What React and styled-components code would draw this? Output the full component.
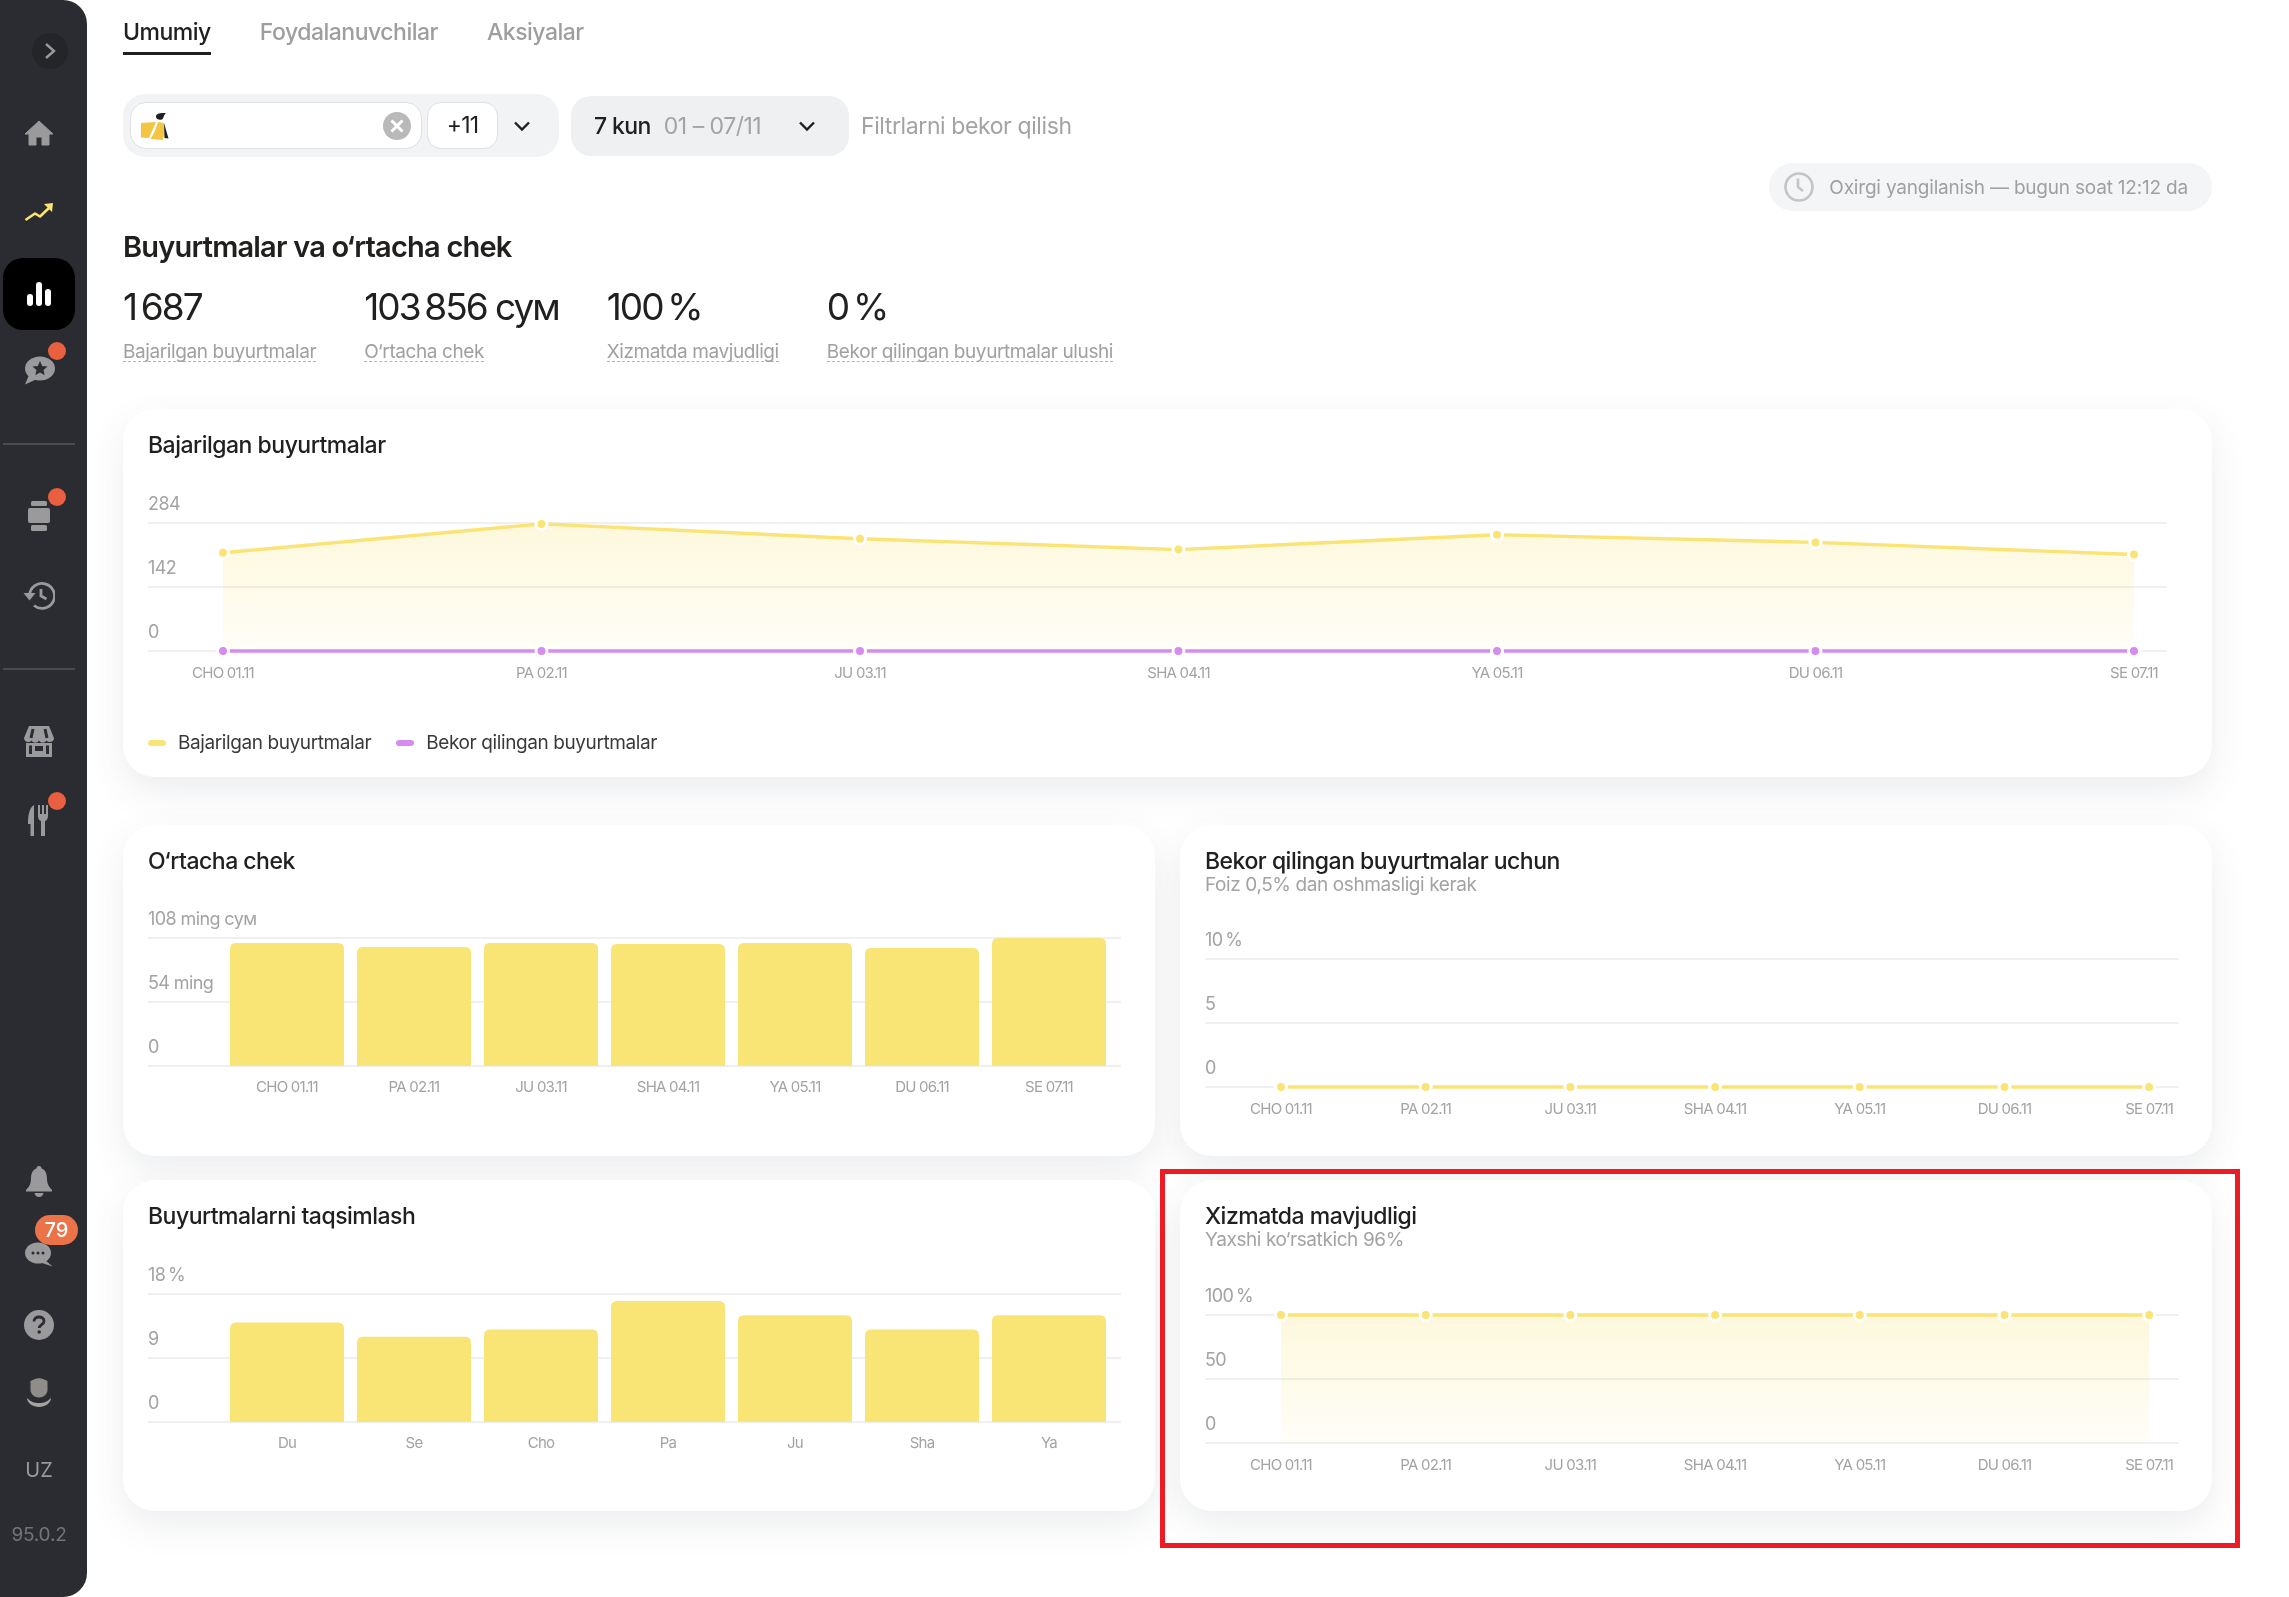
import * as React from "react";
import styled, { createGlobalStyle } from "styled-components";

const FONT = `Inter, "Noto Sans", sans-serif`;

const GlobalStyle = createGlobalStyle`
  html, body {
    margin: 0;
    background: #fff;
    font-family: ${FONT};
    color: #21201f;
  }
  * { box-sizing: border-box; }
`;

const HomeIcon = () => (
  <svg width="30" height="26" viewBox="0 0 30 26">
    <path d="M15 1 L29 14 H25 V25 H18 V17 H12 V25 H5 V14 H1 Z" fill="#9a9a9d" stroke="#9a9a9d" strokeWidth="1" strokeLinejoin="round" />
  </svg>
);

const TrendIcon = () => (
  <svg width="30" height="20" viewBox="0 0 30 20">
    <path d="M1.5 18 L11 11.5 L16 14.5 L25 6" fill="none" stroke="#fbe56f" strokeWidth="2.6" strokeLinejoin="round" />
    <path d="M20 2 L29 1 L28 10 Z" fill="#fbe56f" />
  </svg>
);

const BarsIcon = () => (
  <svg width="24" height="24" viewBox="0 0 24 24">
    <rect x="0" y="12" width="6" height="12" rx="3" fill="#fff" />
    <rect x="9" y="0" width="6" height="24" rx="3" fill="#fff" />
    <rect x="18" y="7" width="6" height="17" rx="3" fill="#fff" />
  </svg>
);

const ReviewIcon = () => (
  <svg width="31" height="29" viewBox="0 0 31 29">
    <ellipse cx="16" cy="12.5" rx="15" ry="12" fill="#9a9a9d" />
    <path d="M5 19 L1 28.5 L12 23.5 Z" fill="#9a9a9d" />
    <path d="M16 5 L18.2 10 L23.5 10.5 L19.5 14 L20.7 19.2 L16 16.5 L11.3 19.2 L12.5 14 L8.5 10.5 L13.8 10 Z" fill="#2b2c31" />
  </svg>
);

const OrderIcon = () => (
  <svg width="22" height="30" viewBox="0 0 22 30">
    <rect x="3" y="0" width="16" height="5" rx="1.5" fill="#9a9a9d" />
    <rect x="0" y="7" width="22" height="15" rx="2" fill="#9a9a9d" />
    <rect x="3" y="24" width="16" height="6" rx="1.5" fill="#9a9a9d" />
  </svg>
);

const HistoryIcon = () => (
  <svg width="32" height="29" viewBox="0 0 32 29">
    <path d="M6.5 14.5 A 12.5 12.5 0 1 1 11 24.5" fill="none" stroke="#9a9a9d" strokeWidth="2.8" />
    <path d="M0.5 12 H12.5 L6.5 19.5 Z" fill="#9a9a9d" />
    <path d="M18 8 V15 L23.5 18" fill="none" stroke="#9a9a9d" strokeWidth="2.8" />
  </svg>
);

const StoreIcon = () => (
  <svg width="30" height="31" viewBox="0 0 30 31">
    <path d="M5 0 H25 L30 12 C30 16 25 17.5 22.5 14.5 C20.5 17.5 17 17.5 15 14.5 C13 17.5 9.5 17.5 7.5 14.5 C5 17.5 0 16 0 12 Z" fill="#9a9a9d" />
    <path d="M9 3 L7 12 M21 3 L23 12" stroke="#2b2c31" strokeWidth="3" />
    <path fillRule="evenodd" d="M2 17 H28 V31 H2 Z M5 19.5 V28 H8 V19.5 Z M11 20 V25 H19 V20 Z M22 19.5 V28 H25 V19.5 Z" fill="#9a9a9d" />
  </svg>
);

const ForkIcon = () => (
  <svg width="22" height="31" viewBox="0 0 22 31">
    <path d="M6 0 V31 H2.5 V19 H0 C0 9 1.5 3 6 0 Z" fill="#9a9a9d" />
    <path d="M10 0 H12 V9 H14 V0 H16 V9 H18 V0 H20 V11 C20 14 18.5 15.5 17 16 V31 H13 V16 C11.5 15.5 10 14 10 11 Z" fill="#9a9a9d" />
  </svg>
);

const BellIcon = () => (
  <svg width="26" height="31" viewBox="0 0 26 31">
    <circle cx="13" cy="2.5" r="2.5" fill="#9a9a9d" />
    <path d="M13 2 C19 2 21 7 21 13 C21 18 23 21 26 24 V25.5 H0 V24 C3 21 5 18 5 13 C5 7 7 2 13 2 Z" fill="#9a9a9d" />
    <path d="M8.5 27 H17.5 C17 29.5 15.2 31 13 31 C10.8 31 9 29.5 8.5 27 Z" fill="#9a9a9d" />
  </svg>
);

const ChatIcon = () => (
  <svg width="28" height="25" viewBox="0 0 28 25">
    <ellipse cx="13" cy="11" rx="13" ry="10.5" fill="#9a9a9d" />
    <path d="M19 17 L27.5 24.5 L17 21 Z" fill="#9a9a9d" />
    <circle cx="8" cy="11" r="1.5" fill="#2b2c31" />
    <circle cx="13" cy="11" r="1.5" fill="#2b2c31" />
    <circle cx="18" cy="11" r="1.5" fill="#2b2c31" />
  </svg>
);

const HelpIcon = () => (
  <svg width="30" height="30" viewBox="0 0 30 30">
    <circle cx="15" cy="15" r="15" fill="#9a9a9d" />
    <path d="M10 11.5 C10 8.5 12.3 7 15 7 C18 7 20 8.7 20 11.2 C20 14.6 15.2 14.6 15.2 18" fill="none" stroke="#2b2c31" strokeWidth="2.8" />
    <circle cx="15.2" cy="22" r="1.8" fill="#2b2c31" />
  </svg>
);

const PersonIcon = () => (
  <svg width="26" height="29" viewBox="0 0 26 29">
    <path d="M4.5 3 L9 1 C11 0 15 0 17 1 L21.5 3 V12 C21.5 16 17.5 19.5 13 19.5 C8.5 19.5 4.5 16 4.5 12 Z" fill="#8f8d8a" />
    <path d="M1 20 C5 24 8 25 13 25 C18 25 21 24 25 20 C25 25 19 29 13 29 C7 29 1 25 1 20 Z" fill="#a5a39f" />
  </svg>
);

const ChevronRight = () => (
  <svg width="12" height="18" viewBox="0 0 12 18">
    <path d="M2 2 L10 9 L2 16" fill="none" stroke="#9a9a9d" strokeWidth="2.4" />
  </svg>
);

const ChevronDown = () => (
  <svg width="18" height="12" viewBox="0 0 18 12">
    <path d="M2 2.5 L9 9.5 L16 2.5" fill="none" stroke="#21201f" strokeWidth="2.4" />
  </svg>
);

const ClearIcon = () => (
  <svg width="28" height="28" viewBox="0 0 28 28">
    <circle cx="14" cy="14" r="14" fill="#b9b9b9" />
    <path d="M8.5 8.5 L19.5 19.5 M19.5 8.5 L8.5 19.5" stroke="#fff" strokeWidth="3" />
  </svg>
);

const ClockIcon = () => (
  <svg width="30" height="30" viewBox="0 0 30 30">
    <circle cx="15" cy="15" r="13.5" fill="none" stroke="#c3c4c6" strokeWidth="2.6" />
    <path d="M14 6.5 V15 L19 19" fill="none" stroke="#c3c4c6" strokeWidth="2.6" />
  </svg>
);

const RestaurantLogo = () => (
  <svg width="28" height="28" viewBox="0 0 28 28">
    <path d="M0 11 L15 10 L8 26 L0 25.5 Z" fill="#f4c542" />
    <path d="M17 10 L23 11 L23.5 19 L22 28 L9.5 27 L14 19 Z" fill="#f4c542" />
    <path d="M15 4.5 C15 2 18 0.5 25 1 C23 2.5 23 4 22 6.5 C21 8.5 15 8.5 15 4.5 Z" fill="#21201f" />
    <path d="M23 11 L27.5 26.5 L23.5 26 Z" fill="#21201f" />
  </svg>
);

const WEEK = ["CHO 01.11", "PA 02.11", "JU 03.11", "SHA 04.11", "YA 05.11", "DU 06.11", "SE 07.11"];
const WEEKDAYS = ["Du", "Se", "Cho", "Pa", "Ju", "Sha", "Ya"];
const ROWS = [30, 94, 158];
const BOTTOM = 158;
const RANGE = 128;
const YELLOW = "#fae476";
const PURPLE = "#d48cf0";

const ChartSvg = styled.svg`
  display: block;
  margin-top: ${(p) => p.$top}px;
  overflow: visible;
`;

const AxisValue = styled.text`
  font: 400 18px ${FONT};
  letter-spacing: -0.6px;
  fill: #a3a3a3;
  dominant-baseline: middle;
`;

const AxisDay = styled.text`
  font: 400 15px ${FONT};
  letter-spacing: -0.75px;
  fill: #a3a3a3;
  text-anchor: middle;
  dominant-baseline: middle;
`;

const Axes = ({ width, yLabels }) => (
  <>
    {ROWS.map((y, i) => (
      <g key={y}>
        <line x1="0" x2={width} y1={y} y2={y} stroke="#f0f0f1" strokeWidth="2" />
        <AxisValue x="0" y={y - 18}>{yLabels[i]}</AxisValue>
      </g>
    ))}
  </>
);

const LineSeries = ({ color, points }) => (
  <>
    <polyline points={points.map((p) => p.join(",")).join(" ")} fill="none" stroke={color} strokeWidth="3.4" />
    {points.map(([x, y]) => (
      <circle key={x} cx={x} cy={y} r="5.5" fill={color} stroke="#fff" strokeWidth="3" />
    ))}
  </>
);

const LineChart = ({ width, top, first, step, max, yLabels, labels = WEEK, series, areaId }) => {
  const xs = labels.map((_, i) => first + step * i);
  const toPoints = (values) => values.map((v, i) => [xs[i], BOTTOM - (v / max) * RANGE]);
  const main = toPoints(series[0].values);
  return (
    <ChartSvg $top={top} width={width} height="192">
      {areaId && (
        <defs>
          <linearGradient id={areaId} x1="0" y1="0" x2="0" y2="1">
            <stop offset="0" stopColor="#fdf8dc" />
            <stop offset="1" stopColor="#fffef8" />
          </linearGradient>
        </defs>
      )}
      <Axes width={width} yLabels={yLabels} />
      {areaId && (
        <polygon
          points={`${xs[0]},${BOTTOM} ${main.map((p) => p.join(",")).join(" ")} ${xs[xs.length - 1]},${BOTTOM}`}
          fill={`url(#${areaId})`}
          style={{ mixBlendMode: "multiply" }}
        />
      )}
      {series.map((s) => (
        <LineSeries key={s.color} color={s.color} points={toPoints(s.values)} />
      ))}
      {labels.map((l, i) => (
        <AxisDay key={l} x={xs[i]} y={BOTTOM + 23}>{l}</AxisDay>
      ))}
    </ChartSvg>
  );
};

const BarChart = ({ top, max, yLabels, labels, values }) => (
  <ChartSvg $top={top} width="973" height="192">
    <Axes width={973} yLabels={yLabels} />
    {values.map((v, i) => {
      const h = (v / max) * RANGE;
      const x = 82 + i * 127;
      return (
        <path
          key={labels[i]}
          d={`M${x} ${BOTTOM} V${BOTTOM - h + 6} q0 -6 6 -6 H${x + 108} q6 0 6 6 V${BOTTOM} Z`}
          fill="#f9e476"
        />
      );
    })}
    {labels.map((l, i) => (
      <AxisDay key={l} x={82 + 57 + i * 127} y={BOTTOM + 22}>{l}</AxisDay>
    ))}
  </ChartSvg>
);

const NAV_TOP = [
  { icon: <HomeIcon /> },
  { icon: <TrendIcon /> },
  { icon: <BarsIcon />, active: true },
  { icon: <ReviewIcon />, dot: true },
];

const App = () => (
  <>
    <GlobalStyle />
    <Page>
      <Sidebar>
        <Toggle><ChevronRight /></Toggle>
        <NavGroup>
          {NAV_TOP.map((item, i) => (
            <NavItem key={i} $active={item.active}>
              {item.icon}
              {item.dot && <Dot />}
            </NavItem>
          ))}
        </NavGroup>
        <Divider />
        <NavGroup>
          <NavItem><OrderIcon /><Dot /></NavItem>
          <NavItem><HistoryIcon /></NavItem>
        </NavGroup>
        <Divider />
        <NavGroup>
          <NavItem><StoreIcon /></NavItem>
          <NavItem><ForkIcon /><Dot /></NavItem>
        </NavGroup>
        <SidebarBottom>
          <BottomItem><BellIcon /></BottomItem>
          <BottomItem $gap={25}><ChatIcon /><CountBadge>79</CountBadge></BottomItem>
          <BottomItem $gap={23}><HelpIcon /></BottomItem>
          <BottomItem $gap={19}><PersonIcon /></BottomItem>
          <BottomItem $gap={30}><Lang>UZ</Lang></BottomItem>
          <BottomItem $gap={16}><Version>95.0.2</Version></BottomItem>
        </SidebarBottom>
      </Sidebar>

      <Main>
        <Tabs>
          <Tab $active>Umumiy</Tab>
          <Tab>Foydalanuvchilar</Tab>
          <Tab>Aksiyalar</Tab>
        </Tabs>

        <Filters>
          <RestaurantFilter>
            <RestaurantInput>
              <RestaurantLogo />
              <ClearIcon />
            </RestaurantInput>
            <MoreBox>+11</MoreBox>
            <FilterChevron><ChevronDown /></FilterChevron>
          </RestaurantFilter>
          <PeriodFilter>
            <PeriodName>7 kun</PeriodName>
            <PeriodDates>01 – 07/11</PeriodDates>
            <ChevronDown />
          </PeriodFilter>
          <ResetLink>Filtrlarni bekor qilish</ResetLink>
        </Filters>

        <UpdatedRow>
          <UpdatedPill>
            <ClockIcon />
            Oxirgi yangilanish — bugun soat 12:12 da
          </UpdatedPill>
        </UpdatedRow>

        <Heading>Buyurtmalar va o‘rtacha chek</Heading>

        <Stats>
          <Stat><StatValue>1{"\u2009"}687</StatValue><StatLabel>Bajarilgan buyurtmalar</StatLabel></Stat>
          <Stat><StatValue>103{"\u2009"}856 сум</StatValue><StatLabel>O‘rtacha chek</StatLabel></Stat>
          <Stat><StatValue>100{"\u2009"}%</StatValue><StatLabel>Xizmatda mavjudligi</StatLabel></Stat>
          <Stat><StatValue>0{"\u2009"}%</StatValue><StatLabel>Bekor qilingan buyurtmalar ulushi</StatLabel></Stat>
        </Stats>

        <WideCard>
          <CardTitle>Bajarilgan buyurtmalar</CardTitle>
          <LineChart
            width={2019}
            top={33}
            first={75}
            step={318.5}
            max={284}
            yLabels={["284", "142", "0"]}
            areaId="ordersFade"
            series={[
              { color: YELLOW, values: [218, 282, 249, 225, 258, 241, 214] },
              { color: PURPLE, values: [0, 0, 0, 0, 0, 0, 0] },
            ]}
          />
          <Legend>
            <LegendItem><LegendMark $color={YELLOW} />Bajarilgan buyurtmalar</LegendItem>
            <LegendItem><LegendMark $color={PURPLE} />Bekor qilingan buyurtmalar</LegendItem>
          </Legend>
        </WideCard>

        <CardGrid>
          <Card>
            <CardTitle>O‘rtacha chek</CardTitle>
            <BarChart
              top={32}
              max={108}
              yLabels={["108 ming сум", "54 ming", "0"]}
              labels={WEEK}
              values={[103.8, 100.4, 103.8, 102.9, 103.8, 99.6, 108]}
            />
          </Card>
          <Card>
            <CardTitle>Bekor qilingan buyurtmalar uchun</CardTitle>
            <CardHint>Foiz 0,5% dan oshmasligi kerak</CardHint>
            <LineChart
              width={974}
              top={34}
              first={76}
              step={144.7}
              max={10}
              yLabels={[`10${"\u2009"}%`, "5", "0"]}
              series={[{ color: YELLOW, values: [0, 0, 0, 0, 0, 0, 0] }]}
            />
          </Card>
          <Card>
            <CardTitle>Buyurtmalarni taqsimlash</CardTitle>
            <BarChart
              top={33}
              max={18}
              yLabels={[`18${"\u2009"}%`, "9", "0"]}
              labels={WEEKDAYS}
              values={[14, 12, 13, 17, 15, 13, 15]}
            />
          </Card>
          <Card>
            <CardTitle>Xizmatda mavjudligi</CardTitle>
            <CardHint>Yaxshi ko‘rsatkich 96%</CardHint>
            <LineChart
              width={974}
              top={35}
              first={76}
              step={144.7}
              max={100}
              yLabels={[`100${"\u2009"}%`, "50", "0"]}
              areaId="serviceFade"
              series={[{ color: YELLOW, values: [100, 100, 100, 100, 100, 100, 100] }]}
            />
            <Highlight />
          </Card>
        </CardGrid>
      </Main>
    </Page>
  </>
);

const Page = styled.div`
  display: flex;
  min-height: 100vh;
`;

const Sidebar = styled.aside`
  flex: 0 0 87px;
  height: 1597px;
  display: flex;
  flex-direction: column;
  padding: 33px 12px 39px 3px;
  background: #2b2c31;
  border-radius: 0 24px 24px 0;
`;

const Toggle = styled.button`
  width: 36px;
  height: 36px;
  margin: 0 0 28px 29px;
  padding: 0;
  border: none;
  border-radius: 50%;
  background: #242529;
  display: flex;
  align-items: center;
  justify-content: center;
`;

const NavGroup = styled.nav`
  display: flex;
  flex-direction: column;
  gap: 7px;
`;

const NavItem = styled.div`
  position: relative;
  height: 72px;
  display: flex;
  align-items: center;
  justify-content: center;
  border-radius: 20px;
  background: ${(p) => (p.$active ? "#000" : "transparent")};
  margin: ${(p) => (p.$active ? "3px 0 -3px" : "0")};
`;

const Dot = styled.span`
  position: absolute;
  top: 8px;
  left: 45px;
  width: 18px;
  height: 18px;
  border-radius: 50%;
  background: #ea5f3f;
`;

const Divider = styled.hr`
  width: 72px;
  height: 2px;
  margin: 37px 0 35px;
  border: none;
  background: #4a4b50;
`;

const SidebarBottom = styled.div`
  margin-top: auto;
  display: flex;
  flex-direction: column;
`;

const BottomItem = styled.div`
  position: relative;
  height: 48px;
  margin-top: ${(p) => p.$gap || 0}px;
  display: flex;
  align-items: center;
  justify-content: center;
`;

const CountBadge = styled.span`
  position: absolute;
  top: -15px;
  left: 32px;
  width: 43px;
  height: 30px;
  border-radius: 15px;
  background: #eb7347;
  color: #fff;
  font: 500 20px/30px ${FONT};
  text-align: center;
`;

const Lang = styled.span`
  font: 400 20px ${FONT};
  color: #9a9a9d;
`;

const Version = styled.span`
  font: 400 19px ${FONT};
  letter-spacing: -0.2px;
  color: #737478;
`;

const Main = styled.main`
  flex: 1;
  min-width: 0;
  padding: 0 77px 0 36px;
`;

const Tabs = styled.div`
  display: flex;
  gap: 49px;
  padding-top: 17px;
`;

const Tab = styled.div`
  height: 38px;
  font: 500 23px/30px ${FONT};
  letter-spacing: -0.5px;
  color: ${(p) => (p.$active ? "#21201f" : "#9e9e9e")};
  border-bottom: 3px solid ${(p) => (p.$active ? "#21201f" : "transparent")};
`;

const Filters = styled.div`
  display: flex;
  align-items: center;
  margin-top: 39px;
`;

const RestaurantFilter = styled.div`
  width: 436px;
  height: 63px;
  display: flex;
  align-items: center;
  gap: 5px;
  padding: 0 7px;
  border-radius: 22px;
  background: #f2f3f5;
`;

const RestaurantInput = styled.div`
  width: 292px;
  height: 47px;
  display: flex;
  align-items: center;
  justify-content: space-between;
  padding: 0 10px 0 10px;
  background: #fff;
  border: 1.5px solid #dfe0e3;
  border-radius: 16px;
`;

const MoreBox = styled.div`
  width: 71px;
  height: 47px;
  background: #fff;
  border: 1.5px solid #dfe0e3;
  border-radius: 14px;
  font: 400 23px/44px ${FONT};
  letter-spacing: -0.8px;
  text-align: center;
`;

const FilterChevron = styled.div`
  margin-left: 10px;
  display: flex;
`;

const PeriodFilter = styled.div`
  width: 278px;
  height: 60px;
  margin-left: 12px;
  display: flex;
  align-items: center;
  padding: 0 33px 0 23px;
  border-radius: 20px;
  background: #eff0f2;
`;

const PeriodName = styled.span`
  font: 500 23px ${FONT};
  letter-spacing: -0.6px;
`;

const PeriodDates = styled.span`
  flex: 1;
  margin-left: 13px;
  font: 400 23px ${FONT};
  letter-spacing: -0.5px;
  color: #a3a3a3;
`;

const ResetLink = styled.span`
  margin-left: 12px;
  font: 400 23px ${FONT};
  letter-spacing: -0.4px;
  color: #a3a3a3;
`;

const UpdatedRow = styled.div`
  display: flex;
  justify-content: flex-end;
  margin-top: 6px;
`;

const UpdatedPill = styled.div`
  height: 48px;
  display: flex;
  align-items: center;
  gap: 15px;
  padding: 0 24px 0 15px;
  border-radius: 24px;
  background: #f4f5f7;
  font: 400 19px ${FONT};
  letter-spacing: -0.2px;
  color: #a0a0a0;
`;

const Heading = styled.h1`
  margin: 18px 0 0;
  font: 600 29px/36px ${FONT};
  letter-spacing: -0.8px;
`;

const Stats = styled.div`
  display: flex;
  gap: 48px;
  margin-top: 19px;
`;

const Stat = styled.div`
  display: flex;
  flex-direction: column;
  align-items: flex-start;
`;

const StatValue = styled.div`
  font: 400 37px/46px ${FONT};
  letter-spacing: -2px;
`;

const StatLabel = styled.div`
  margin-top: 13px;
  font: 400 19px/18px ${FONT};
  letter-spacing: -0.4px;
  color: #a0a0a0;
  border-bottom: 1.5px dashed #b5b5b5;
`;

const Card = styled.section`
  position: relative;
  min-height: 331px;
  padding: 21px 0 0 25px;
  border-radius: 32px;
  background: #fff;
  box-shadow: 0 14px 36px rgba(70, 80, 100, 0.1);
`;

const WideCard = styled(Card)`
  height: 368px;
  margin-top: 47px;
`;

const CardGrid = styled.div`
  display: grid;
  grid-template-columns: 1032px 1032px;
  gap: 24px 25px;
  margin-top: 48px;
`;

const CardTitle = styled.h2`
  margin: 0;
  font: 500 23px/30px ${FONT};
  letter-spacing: -0.5px;
`;

const CardHint = styled.div`
  margin-top: -1px;
  font: 400 19px/20px ${FONT};
  letter-spacing: -0.4px;
  color: #a3a3a3;
`;

const Legend = styled.div`
  display: flex;
  gap: 25px;
  margin-top: 46px;
`;

const LegendItem = styled.div`
  display: flex;
  align-items: center;
  gap: 12px;
  font: 400 19px/24px ${FONT};
  letter-spacing: -0.4px;
  color: #3a3a3a;
`;

const LegendMark = styled.span`
  width: 18px;
  height: 6px;
  border-radius: 3px;
  background: ${(p) => p.$color};
`;

const Highlight = styled.div`
  position: absolute;
  top: -11px;
  left: -20px;
  right: -28px;
  bottom: -37px;
  border: 5px solid #ed1c24;
  pointer-events: none;
`;

export default App;
